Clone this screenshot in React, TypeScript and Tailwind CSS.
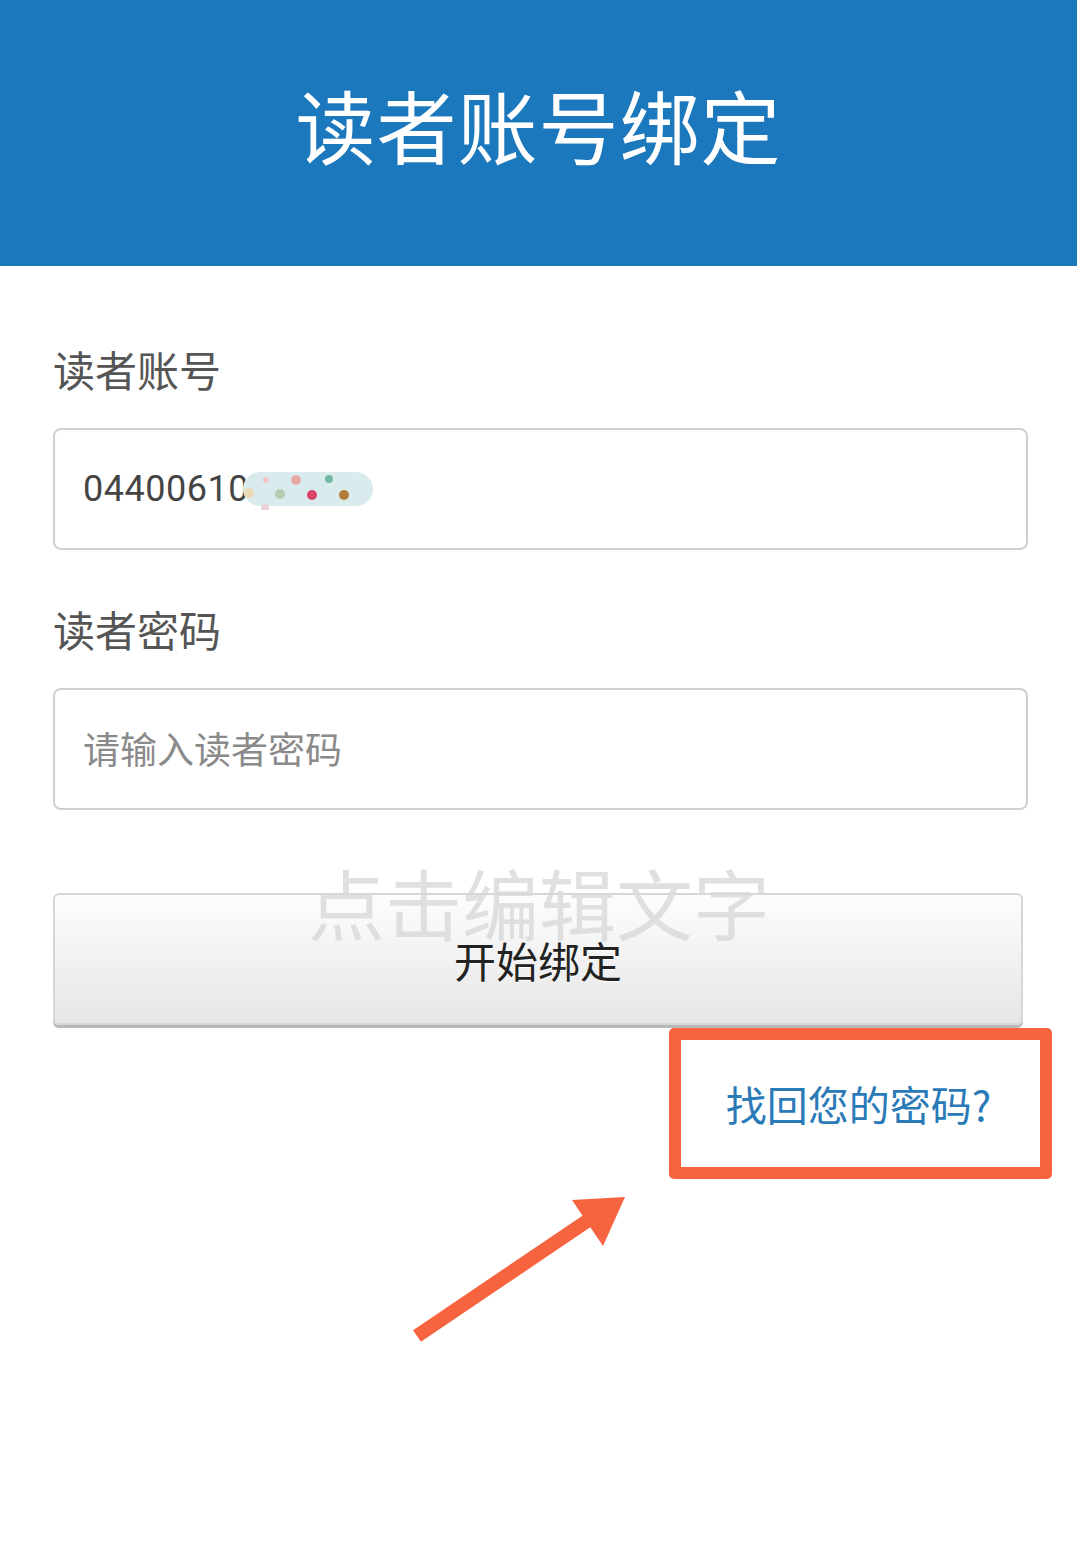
const cjk = { fontFamily: '"Noto Sans CJK SC", "Noto Sans", sans-serif' };

function Field({ label, children }: { label: string; children: React.ReactNode }) {
  return (
    <div>
      <div className="h-[47px] text-[42px] leading-[47px] text-[#555]">{label}</div>
      <div className="mt-[36px] flex h-[122px] items-center rounded-[8px] border-2 border-[#d0d0d0] bg-white pl-[28px]">
        {children}
      </div>
    </div>
  );
}

function Blur() {
  // the smudge that hides the rest of the account number
  return (
    <svg width="130" height="40" viewBox="0 0 130 40" className="-ml-[6px] mt-[2px]">
      <rect x="0" y="2" width="130" height="34" rx="17" fill="#d9ebec" />
      <circle cx="6" cy="23" r="5" fill="#ecd9b8" />
      <circle cx="23" cy="10" r="3" fill="#efc8cc" />
      <circle cx="37" cy="24" r="5" fill="#b5cfae" />
      <circle cx="53" cy="10" r="5" fill="#e8aaa8" />
      <circle cx="69" cy="25" r="5" fill="#d94368" />
      <circle cx="86" cy="9" r="4" fill="#73b8a0" />
      <circle cx="101" cy="25" r="5" fill="#b57a38" />
      <circle cx="22" cy="38" r="4" fill="#ead2d6" />
    </svg>
  );
}

export default function App() {
  return (
    <div className="relative min-h-[1551px] w-[1077px] overflow-hidden bg-white" style={cjk}>
      <header className="flex h-[266px] items-center justify-center bg-[#1b78bc] pb-[20px]">
        <h1 className="text-[80px] font-normal leading-none tracking-[1px] text-white">读者账号绑定</h1>
      </header>

      <main className="px-[53px] pr-[49px] pt-[79px]">
        <Field label="读者账号">
          <span className="text-[36px] tracking-[0.5px] text-[#444]" style={{ fontFamily: '"Roboto", sans-serif' }}>
            04400610
          </span>
          <Blur />
        </Field>

        <div className="mt-[55px]">
          <Field label="读者密码">
            <span className="text-[37px] text-[#8a8a8a]">请输入读者密码</span>
          </Field>
        </div>

        <div className="relative mt-[83px] mr-[5px]">
          <button className="flex h-[132px] w-full items-center justify-center rounded-[6px] border-2 border-[#d6d6d6] bg-gradient-to-b from-[#fdfdfd] to-[#e6e6e6] shadow-[0_3px_0_#b8b8b8]">
            <span className="text-[42px] text-[#222] [text-shadow:0_1px_0_#fff]">开始绑定</span>
          </button>
          <span className="pointer-events-none absolute left-[255px] top-[-30px] text-[77px] leading-none text-[#d8d8d8]/80">
            点击编辑文字
          </span>
        </div>

        <div className="-mr-[24px] mt-[3px] flex justify-end">
          <a className="flex h-[151px] w-[383px] items-center justify-center rounded-[5px] border-[12px] border-[#f5633f] pr-[4px] text-[41px] text-[#2a7ab8]">
            找回您的密码?
          </a>
        </div>
      </main>

      <svg className="absolute left-[405px] top-[1190px]" width="230" height="160" viewBox="0 0 230 160">
        <line x1="12" y1="146" x2="188" y2="27" stroke="#f5633f" strokeWidth="14" />
        <polygon points="220,7 167,10 198,56" fill="#f5633f" />
      </svg>
    </div>
  );
}
